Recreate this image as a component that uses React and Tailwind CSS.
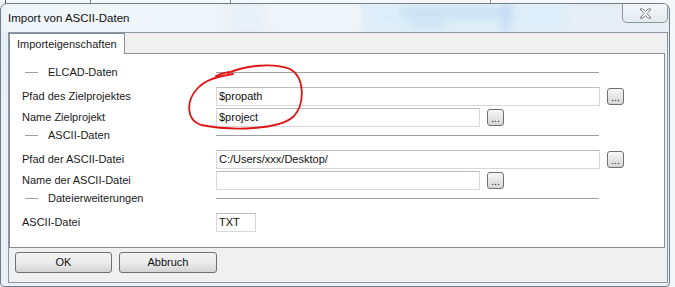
import React from "react";

function Ellipsis() {
  return (
    <div className="w-[17px] h-[17px] rounded-[3px] border border-[#707070] bg-gradient-to-b from-[#f7f7f7] to-[#d6d6d6] flex items-end justify-center pb-[1px] text-[10px] leading-[10px] text-[#222] shrink-0">
      ...
    </div>
  );
}

function Input({ w, value }) {
  return (
    <div
      className={`${w} h-[19px] border border-[#d6d8dc] border-t-[#b9bcc1] bg-white pl-[2px] flex items-center text-[11px] text-[#111] shrink-0`}
    >
      {value}
    </div>
  );
}

function Sep({ label }) {
  return (
    <div className="h-[16px] flex items-center">
      <div className="w-[194px] flex items-center shrink-0">
        <div className="ml-[3px] w-[13px] h-px bg-[#a0a0a0]" />
        <span className="ml-[10px] text-[11px] text-[#1a1a1a]">{label}</span>
      </div>
      <div className="w-[383px] h-px bg-[#a0a0a0]" />
    </div>
  );
}

function Row({ label, inputW, value, btnGap, mt, noBtn }) {
  return (
    <div className={`${mt} h-[19px] flex items-center`}>
      <div className="w-[194px] shrink-0 text-[11px] text-[#1a1a1a] -mt-[1px]">{label}</div>
      <Input w={inputW} value={value} />
      {!noBtn && <div className={`${btnGap} flex items-center`}><Ellipsis /></div>}
    </div>
  );
}

export default function App() {
  return (
    <div
      className="w-[675px] h-[287px] relative overflow-hidden bg-[#f5f8fb]"
      style={{ fontFamily: '"Liberation Sans", Arial, sans-serif' }}
    >
      {/* background behind window (top) */}
      <div className="absolute left-[5px] top-0 w-px h-[4px] bg-[#555]" />
      <div className="absolute left-[90px] top-0 w-px h-[4px] bg-[#777]" />
      <div className="absolute left-[230px] top-0 w-px h-[4px] bg-[#888]" />
      <div className="absolute left-[490px] top-0 w-px h-[4px] bg-[#888]" />

      {/* window */}
      <div className="relative mt-[3px] w-[670px] h-[284px] border border-[#6f7c89] rounded-t-[7px] rounded-b-[4px] bg-gradient-to-b from-[#e6eef5] via-[#e8eff5] to-[#eaf0f5] flex flex-col overflow-hidden">
        {/* glass blobs */}
        <div className="absolute left-[365px] top-[0px] w-[200px] h-[28px] bg-[#d8eefb] blur-[6px] opacity-80" />
        <div className="absolute left-[400px] top-[5px] w-[110px] h-[7px] bg-[#b4cdea] blur-[4px] opacity-60" />
        <div className="absolute left-[412px] top-[17px] w-[30px] h-[6px] bg-[#b4cdea] blur-[4px] opacity-50" />
        <div className="absolute left-[500px] top-[0px] w-[10px] h-[28px] bg-[#c0d6ee] blur-[3px] opacity-60" />
        <div className="absolute left-[228px] top-[0px] w-[36px] h-[28px] bg-[#cddff0] blur-[6px] opacity-60" />
        <div className="absolute left-[0px] top-[0px] w-[360px] h-[28px] bg-white/40 blur-[2px]" />

        {/* title bar */}
        <div className="relative h-[28px] flex items-center pl-[7px] shrink-0">
          <span className="text-[11.5px] text-[#111] mt-[1px]">Import von ASCII-Daten</span>
        </div>

        {/* close button */}
        <div className="absolute right-[1px] top-[-1px] w-[46px] h-[20px] border border-[#8a96a3] rounded-b-[5px] bg-gradient-to-b from-[#f4f7fa] to-[#e3e9ef] flex items-center justify-center">
          <svg width="13" height="11" viewBox="0 0 13 11">
            <path
              d="M1 1 H4 L6.5 3.5 L9 1 H12 L8 5.5 L12 10 H9 L6.5 7.5 L4 10 H1 L5 5.5 Z"
              fill="#ffffff"
              stroke="#6a737d"
              strokeWidth="0.9"
              strokeLinejoin="round"
            />
          </svg>
        </div>

        {/* client */}
        <div className="relative ml-[7px] mr-[1px] h-[251px] border border-[#8a96a3] bg-[#f0f0f0] flex flex-col shrink-0">
          {/* tab strip */}
          <div className="h-[20px] flex shrink-0">
            <div className="relative z-10 w-[116px] h-[21px] border border-b-0 border-[#898c95] bg-white pl-[7px] flex items-center text-[11px] text-[#1a1a1a]">
              Importeigenschaften
            </div>
          </div>
          {/* panel */}
          <div className="mr-[2px] h-[195px] border border-[#898c95] bg-white pl-[12px] pt-[10px] flex flex-col shrink-0">
            <Sep label="ELCAD-Daten" />
            <Row label="Pfad des Zielprojektes" inputW="w-[384px]" value="$propath" btnGap="ml-[7px]" mt="mt-[7px]" />
            <Row label="Name Zielprojekt" inputW="w-[264px]" value="$project" btnGap="ml-[7px]" mt="mt-[2px]" />
            <Sep label="ASCII-Daten" />
            <Row label="Pfad der ASCII-Datei" inputW="w-[384px]" value="C:/Users/xxx/Desktop/" btnGap="ml-[7px]" mt="mt-[7px]" />
            <Row label="Name der ASCII-Datei" inputW="w-[264px]" value="" btnGap="ml-[7px]" mt="mt-[2px]" />
            <Sep label="Dateierweiterungen" />
            <Row label="ASCII-Datei" inputW="w-[40px]" value="TXT" mt="mt-[7px]" noBtn />
          </div>
          {/* buttons */}
          <div className="mt-[4px] ml-[6px] flex gap-[7px]">
            <div className="w-[97px] h-[21px] rounded-[3px] border border-[#707070] bg-gradient-to-b from-[#f2f2f2] via-[#ebebeb] to-[#d4d4d4] flex items-center justify-center text-[11px] text-[#111]">
              OK
            </div>
            <div className="w-[98px] h-[21px] rounded-[3px] border border-[#707070] bg-gradient-to-b from-[#f2f2f2] via-[#ebebeb] to-[#d4d4d4] flex items-center justify-center text-[11px] text-[#111]">
              Abbruch
            </div>
          </div>
        </div>
      </div>

      {/* red annotation */}
      <svg className="absolute left-0 top-0 pointer-events-none" width="675" height="287" viewBox="0 0 675 287">
        <path
          d="M216 76 C220 74 224 73 229 72 M228 73 C245 66 272 62 290 69 C305 77 305 104 294 116 C280 130 232 131 201 125 C186 120 186 101 197 89 C204 81 214 77 233 74"
          fill="none"
          stroke="#e01515"
          strokeWidth="1.8"
          strokeLinecap="round"
        />
      </svg>
    </div>
  );
}
